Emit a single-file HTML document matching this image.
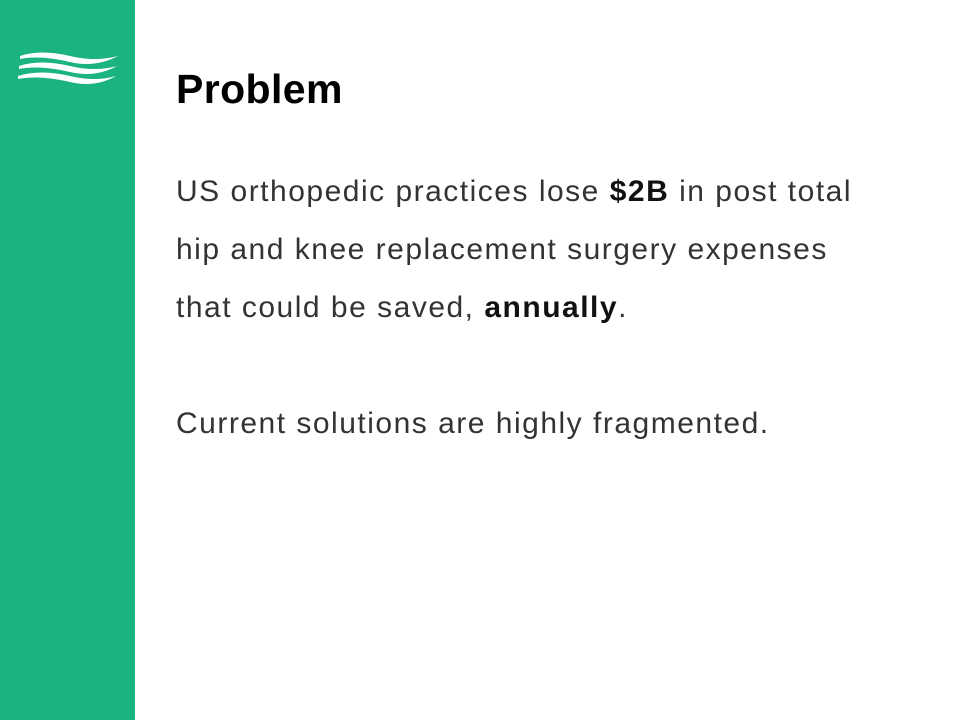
<!DOCTYPE html>
<html><head><style>
body{margin:0;width:960px;height:720px;background:#fff;position:relative;overflow:hidden;font-family:"Liberation Sans",sans-serif}
.bar{position:absolute;left:0;top:0;width:135px;height:720px;background:#1bb37e}
h1{position:absolute;left:176px;top:64px;margin:0;font-size:41px;font-weight:bold;color:#000;line-height:50px;letter-spacing:0.4px}
.p{position:absolute;left:176px;margin:0;font-size:30px;color:#333;line-height:58px;white-space:nowrap;letter-spacing:1.5px}
b{color:#111}
</style></head><body>
<div class="bar"><svg width="135" height="120" style="position:absolute;left:0;top:0">
<g fill="#fff">
<path d="M20 56 Q40 49 70 56 Q95 62 118 56 Q95 68 70 62 Q40 55 20 59Z"/>
<path d="M19 66 Q40 59 70 66 Q95 72 117 66 Q95 78 70 72 Q40 65 19 69Z"/>
<path d="M18 76 Q40 69 70 76 Q95 82 116 76 Q95 88 70 82 Q40 75 18 79Z"/>
</g></svg></div>
<h1>Problem</h1>
<div class="p" style="top:163px">US orthopedic practices lose <b>$2B</b> in post total<br>hip and knee replacement surgery expenses<br>that could be saved, <b>annually</b>.</div>
<div class="p" style="top:395px">Current solutions are highly fragmented.</div>
</body></html>
